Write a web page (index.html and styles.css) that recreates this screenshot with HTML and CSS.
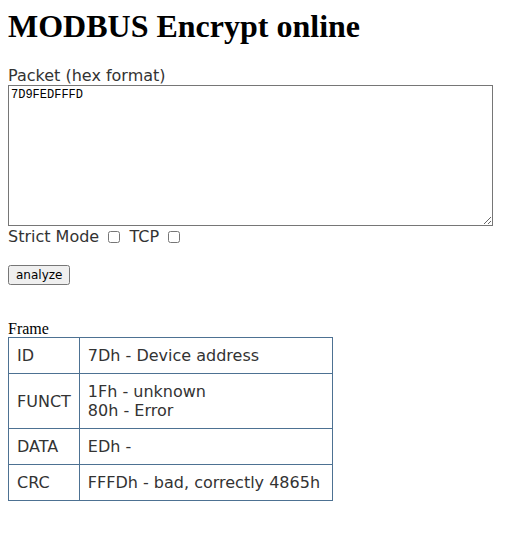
FILE: index.html
```html
<!DOCTYPE html>
<html lang="en">
<head>
  <meta charset="UTF-8" />
  <title>MODBUS Encrypt online</title>
  <link rel="stylesheet" href="styles.css">
</head>
<body>
  <h1>MODBUS Encrypt online</h1>

  <form class="packet-form">
    <label class="packet-label" for="packet">Packet (hex format)</label>
    <textarea id="packet" class="packet-input">7D9FEDFFFD</textarea>
    <div class="options">
      Strict Mode <input type="checkbox" /> TCP <input type="checkbox" />
    </div>
    <button type="button" class="analyze">analyze</button>
  </form>

  <table class="frame">
    <caption>Frame</caption>
    <tr><td>ID</td><td>7Dh - Device address</td></tr>
    <tr><td>FUNCT</td><td>1Fh - unknown<br />80h - Error</td></tr>
    <tr><td>DATA</td><td>EDh - </td></tr>
    <tr><td>CRC</td><td>FFFDh - bad, correctly 4865h</td></tr>
  </table>
</body>
</html>
```

FILE: styles.css
```css
body {
  margin: 8px;
  font-family: "Liberation Serif", serif;
  color: #000;
}

h1 {
  margin: 0 0 21px;
  font-size: 32px;
  line-height: 37px;
}

.packet-form {
  font-family: "DejaVu Sans", sans-serif;
  font-size: 16px;
  color: #333;
}

.packet-label {
  display: block;
  line-height: 19px;
}

.packet-input {
  display: block;
  box-sizing: border-box;
  width: 485px;
  height: 141px;
  margin: 0;
  padding: 2px;
  font-family: "Liberation Mono", monospace;
  font-size: 12px;
  border: 1px solid #767676;
}

.options {
  line-height: 21px;
  margin-bottom: 17px;
}

.options input {
  margin: 0 4px;
  width: 12px;
  height: 12px;
  vertical-align: -1px;
}

.analyze {
  font-family: "DejaVu Sans", sans-serif;
  font-size: 12px;
  padding: 1px 6px;
  color: #000;
}

.frame {
  margin-top: 35px;
  border-collapse: collapse;
  font-family: "DejaVu Sans", sans-serif;
  font-size: 16px;
  color: #333;
}

.frame caption {
  text-align: left;
  font-family: "Liberation Serif", serif;
  font-size: 16px;
  color: #000;
  line-height: 17px;
}

.frame td {
  border: 1px solid #4d7192;
  padding: 8px;
  line-height: 19px;
}

.frame td + td {
  padding-right: 12px;
}
```
